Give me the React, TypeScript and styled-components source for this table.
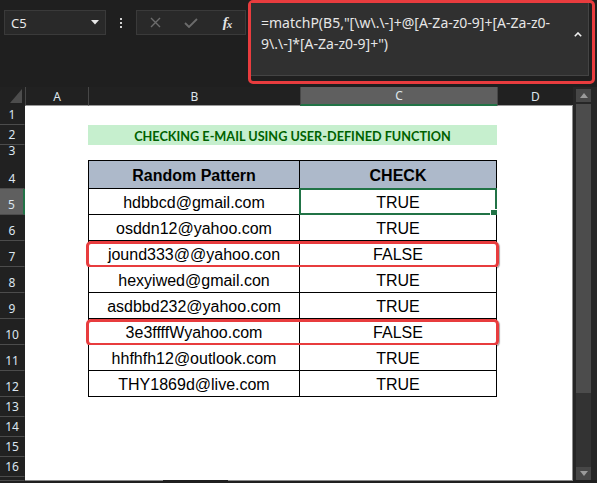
import React from "react";
import styled, { createGlobalStyle } from "styled-components";

const Global = createGlobalStyle`
  html, body { margin: 0; padding: 0; background: #1f1f1f; overflow: hidden; }
  body { width: 597px; height: 483px; }
  #root { width: 597px; height: 483px; }
`;

const Window = styled.div`
  width: 597px;
  height: 483px;
  display: flex;
  flex-direction: column;
  background: #1f1f1f;
  font-family: "Noto Sans", "Open Sans", sans-serif;
  overflow: hidden;
`;

/* ---------- top bar ---------- */
const TopBar = styled.div`
  height: 87px;
  flex-shrink: 0;
  display: flex;
  align-items: flex-start;
`;

const NameBox = styled.div`
  margin: 10px 0 0 4px;
  width: 102px;
  height: 25px;
  box-sizing: border-box;
  background: #292929;
  border: 1px solid #3a3a3a;
  display: flex;
  align-items: center;
  justify-content: space-between;
  padding: 0 6px 0 6px;
  color: #e8e8e8;
  font-size: 13px;
`;

const Kebab = styled.div`
  margin: 18px 0 0 14px;
  width: 2px;
  display: flex;
  flex-direction: column;
  gap: 2px;
  span {
    width: 2px;
    height: 2px;
    background: #d0d0d0;
  }
`;

const ButtonGroup = styled.div`
  margin: 10px 0 0 14px;
  width: 110px;
  height: 25px;
  box-sizing: border-box;
  background: #292929;
  border: 1px solid #3a3a3a;
  display: grid;
  grid-template-columns: 36px 36px 36px;
`;

const IconSlot = styled.div`
  display: flex;
  align-items: center;
  justify-content: center;
`;

const Fx = styled.span`
  font-family: "Liberation Serif", "DejaVu Serif", serif;
  font-style: italic;
  font-weight: 700;
  font-size: 15px;
  color: #e4e4e4;
  letter-spacing: -1px;
  small {
    font-size: 11px;
    position: relative;
    top: 1px;
  }
`;

const FormulaFrame = styled.div`
  margin: 0 2px 0 2px;
  flex: 1;
  height: 84px;
  box-sizing: border-box;
  border: 3px solid #e83c3e;
  border-radius: 5px;
  padding: 0 3px 5px 0;
  background: #1f1f1f;
  display: flex;
`;

const FormulaPanel = styled.div`
  flex: 1;
  background: #303030;
  border-right: 1px solid #444;
  border-bottom: 1px solid #444;
  display: flex;
  justify-content: space-between;
  padding: 9px 6px 0 10px;
`;

const FormulaText = styled.div`
  color: #e6e6e6;
  font-size: 14px;
  line-height: 21px;
  white-space: pre;
`;

const Caret = styled.div`
  padding-top: 8px;
`;

/* ---------- sheet ---------- */
const Main = styled.div`
  display: flex;
  height: 393px;
  flex-shrink: 0;
`;

const Sheet = styled.div`
  width: 573px;
  display: flex;
  flex-direction: column;
`;

const COLS = "25px 63px 212px 197px 76px";

const ColHeaderRow = styled.div`
  display: grid;
  grid-template-columns: ${COLS};
  height: 19px;
  flex-shrink: 0;
`;

const Corner = styled.div`
  background: #212121;
  display: flex;
  align-items: flex-end;
  justify-content: flex-end;
  padding: 0 3px 3px 0;
`;

const ColHead = styled.div<{ $active?: boolean }>`
  box-sizing: border-box;
  background: ${(p) => (p.$active ? "#5f5f5f" : "#212121")};
  border-left: 1px solid #474747;
  border-bottom: ${(p) => (p.$active ? "2px solid #217346" : "1px solid #9a9a9a")};
  color: #dfe6ec;
  font-size: 12px;
  display: flex;
  align-items: center;
  justify-content: center;
`;

const Body = styled.div`
  flex: 1;
  background: #fff;
  border-right: 1px solid #8c8c8c;
  display: flex;
  flex-direction: column;
`;

const Row = styled.div<{ $h: number }>`
  position: relative;
  display: grid;
  grid-template-columns: ${COLS};
  height: ${(p) => p.$h}px;
  flex-shrink: 0;
`;

const RowHead = styled.div<{ $active?: boolean }>`
  box-sizing: border-box;
  background: ${(p) => (p.$active ? "#5f5f5f" : "#212121")};
  border-bottom: 1px solid #4c4c4c;
  border-right: ${(p) => (p.$active ? "2px solid #217346" : "1px solid #212121")};
  color: #dce6f0;
  font-size: 12px;
  line-height: 12px;
  display: flex;
  align-items: flex-end;
  justify-content: center;
  padding-bottom: 3px;
`;

const Blank = styled.div``;

const Title = styled.div`
  grid-column: span 2;
  background: #c6efce;
  color: #006100;
  font-family: Lato, "Open Sans", sans-serif;
  font-weight: 700;
  font-size: 12.7px;
  display: flex;
  align-items: center;
  justify-content: center;
  padding-top: 1px;
`;

const TCell = styled.div<{ $head?: boolean; $first?: boolean }>`
  position: relative;
  box-sizing: border-box;
  border-right: 1px solid #000;
  border-bottom: 1px solid #000;
  border-left: ${(p) => (p.$first ? "1px solid #000" : "none")};
  border-top: ${(p) => (p.$head ? "1px solid #000" : "none")};
  background: ${(p) => (p.$head ? "#adb9ca" : "#fff")};
  font-family: "Liberation Sans", Arial, sans-serif;
  font-size: 16px;
  font-weight: ${(p) => (p.$head ? 700 : 400)};
  color: #000;
  display: flex;
  align-items: center;
  justify-content: center;
  padding-top: ${(p) => (p.$head ? 3 : 3)}px;
`;

const Selection = styled.div`
  position: absolute;
  top: -1px;
  left: -1px;
  right: -1px;
  bottom: -1px;
  border: 2px solid #217346;
  pointer-events: none;
`;

const Handle = styled.div`
  position: absolute;
  right: -3px;
  bottom: -4px;
  width: 6px;
  height: 6px;
  background: #217346;
  border: 1px solid #fff;
`;

const Highlight = styled.div`
  position: absolute;
  left: 86px;
  width: 413px;
  top: 0;
  bottom: -1px;
  box-sizing: border-box;
  border: 3px solid #e83c3e;
  border-radius: 5px;
  box-shadow: 1px 1px 1px rgba(0, 0, 0, 0.35);
  pointer-events: none;
`;

/* ---------- scrollbar ---------- */
const VScroll = styled.div`
  width: 24px;
  box-sizing: border-box;
  padding: 2px 6px 0 3px;
  background: #262626;
  display: flex;
  flex-direction: column;
  position: relative;
`;

const ScrollBtn = styled.div`
  height: 13px;
  background: #474747;
  display: flex;
  align-items: center;
  justify-content: center;
  flex-shrink: 0;
`;

const Track = styled.div`
  margin-top: 2px;
  flex: 1;
  background: #333;
  display: flex;
  flex-direction: column;
`;

const Thumb = styled.div`
  height: 289px;
  background: #4c4c4c;
`;

const BottomBar = styled.div`
  height: 3px;
  display: flex;
  background: #1f1f1f;
`;

const BottomSeg = styled.div<{ $w: number; $ml: number }>`
  width: ${(p) => p.$w}px;
  margin-left: ${(p) => p.$ml}px;
  border-top: 1px solid #8a8a8a;
`;

const data: [string, string][] = [
  ["hdbbcd@gmail.com", "TRUE"],
  ["osddn12@yahoo.com", "TRUE"],
  ["jound333@@yahoo.con", "FALSE"],
  ["hexyiwed@gmail.con", "TRUE"],
  ["asdbbd232@yahoo.com", "TRUE"],
  ["3e3ffffWyahoo.com", "FALSE"],
  ["hhfhfh12@outlook.com", "TRUE"],
  ["THY1869d@live.com", "TRUE"],
];

const emptyRows = [
  { n: 13, h: 20 },
  { n: 14, h: 20 },
  { n: 15, h: 20 },
  { n: 16, h: 20 },
];

export default function App() {
  return (
    <>
      <Global />
      <Window>
        <TopBar>
          <NameBox>
            <span>C5</span>
            <svg width="8" height="5" viewBox="0 0 8 5">
              <polygon points="0,0 8,0 4,4.5" fill="#e8e8e8" />
            </svg>
          </NameBox>
          <Kebab>
            <span />
            <span />
            <span />
          </Kebab>
          <ButtonGroup>
            <IconSlot>
              <svg width="11" height="11" viewBox="0 0 11 11">
                <path d="M1 1 L10 10 M10 1 L1 10" stroke="#6c6c6c" strokeWidth="1.4" />
              </svg>
            </IconSlot>
            <IconSlot>
              <svg width="14" height="10" viewBox="0 0 14 10">
                <path d="M1 5 L5 9 L13 1" stroke="#6c6c6c" strokeWidth="1.8" fill="none" />
              </svg>
            </IconSlot>
            <IconSlot>
              <Fx>
                f<small>x</small>
              </Fx>
            </IconSlot>
          </ButtonGroup>
          <FormulaFrame>
            <FormulaPanel>
              <FormulaText>
                {'=matchP(B5,"[\\w\\.\\-]+@[A-Za-z0-9]+[A-Za-z0-'}
                {"\n"}
                {'9\\.\\-]*[A-Za-z0-9]+")'}
              </FormulaText>
              <Caret>
                <svg width="8" height="5" viewBox="0 0 8 5">
                  <path d="M0.8 4.2 L4 1 L7.2 4.2" stroke="#f0f0f0" strokeWidth="1.6" fill="none" />
                </svg>
              </Caret>
            </FormulaPanel>
          </FormulaFrame>
        </TopBar>

        <Main>
          <Sheet>
            <ColHeaderRow>
              <Corner>
                <svg width="12" height="14" viewBox="0 0 12 14">
                  <polygon points="12,0 12,14 0,14" fill="#4d4d4d" />
                </svg>
              </Corner>
              <ColHead>A</ColHead>
              <ColHead>B</ColHead>
              <ColHead $active>C</ColHead>
              <ColHead>D</ColHead>
            </ColHeaderRow>
            <Body>
              <Row $h={19}>
                <RowHead>1</RowHead>
              </Row>
              <Row $h={20}>
                <RowHead>2</RowHead>
                <Blank />
                <Title>CHECKING E-MAIL USING USER-DEFINED FUNCTION</Title>
              </Row>
              <Row $h={15}>
                <RowHead>3</RowHead>
              </Row>
              <Row $h={29}>
                <RowHead>4</RowHead>
                <Blank />
                <TCell $head $first>
                  Random Pattern
                </TCell>
                <TCell $head>CHECK</TCell>
              </Row>
              {data.map(([email, check], i) => (
                <Row $h={26} key={email}>
                  <RowHead $active={i === 0}>{i + 5}</RowHead>
                  <Blank />
                  <TCell $first>{email}</TCell>
                  <TCell>
                    {check}
                    {i === 0 && (
                      <Selection>
                        <Handle />
                      </Selection>
                    )}
                  </TCell>
                  {check === "FALSE" && <Highlight />}
                </Row>
              ))}
              {emptyRows.map((r) => (
                <Row $h={r.h} key={r.n}>
                  <RowHead>{r.n}</RowHead>
                </Row>
              ))}
              <Row $h={3}>
                <RowHead />
              </Row>
            </Body>
          </Sheet>
          <VScroll>
            <ScrollBtn>
              <svg width="8" height="5" viewBox="0 0 8 5">
                <polygon points="0,5 8,5 4,0" fill="#9a9a9a" />
              </svg>
            </ScrollBtn>
            <Track>
              <Thumb />
            </Track>
            <ScrollBtn>
              <svg width="8" height="5" viewBox="0 0 8 5">
                <polygon points="0,0 8,0 4,5" fill="#9a9a9a" />
              </svg>
            </ScrollBtn>
          </VScroll>
        </Main>
        <BottomBar>
          <BottomSeg $ml={25} $w={138} />
          <BottomSeg $ml={65} $w={345} />
        </BottomBar>
      </Window>
    </>
  );
}
